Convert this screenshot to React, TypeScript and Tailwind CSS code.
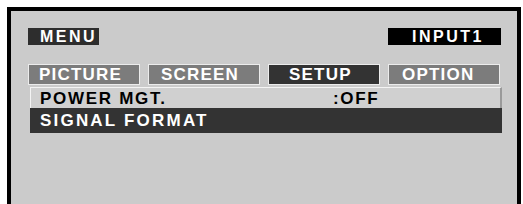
import React from "react";

const font = { fontFamily: '"Liberation Sans", Arial, Helvetica, sans-serif' };

function Tab({ label, active, pad }: { label: string; active?: boolean; pad: string }) {
  return (
    <div
      className={
        "w-[112px] h-[21px] border border-[#ececec] flex items-center text-white font-bold text-[17px] tracking-[1.2px] leading-none " +
        pad +
        " " +
        (active ? "bg-[#333333]" : "bg-[#7c7c7c]")
      }
    >
      {label}
    </div>
  );
}

export default function App() {
  return (
    <div className="w-[523px] h-[204px] bg-white overflow-hidden pl-[7px] pt-[7px]" style={font}>
      <div className="w-[514px] h-[230px] border-4 border-black bg-[#cbcbcb] flex flex-col">
        <div className="flex justify-between pl-[17px] pr-[16px] pt-[17px]">
          <div className="w-[71px] h-[17px] bg-[#2d2d2d] text-white font-bold text-[16px] tracking-[2.5px] leading-none flex items-center pl-[12px]">
            MENU
          </div>
          <div className="w-[113px] h-[17px] bg-black text-white font-bold text-[16px] tracking-[2.5px] leading-none flex items-center pl-[24px]">
            INPUT1
          </div>
        </div>
        <div className="flex gap-[8px] pl-[17px] mt-[19px]">
          <Tab label="PICTURE" pad="pl-[10px]" />
          <Tab label="SCREEN" pad="pl-[12px]" />
          <Tab label="SETUP" pad="pl-[20px]" active />
          <Tab label="OPTION" pad="pl-[13px]" />
        </div>
        <div className="ml-[19px] w-[472px] mt-[2px] flex flex-col">
          <div className="h-[21px] bg-[#d0d0d0] border-t border-l border-t-[#f4f4f4] border-l-[#f4f4f4] border-r-2 border-r-[#9a9a9a] flex items-center pl-[9px] text-black font-bold text-[17px] tracking-[1.7px] leading-none">
            <span className="w-[293px]">POWER MGT.</span>
            <span>:OFF</span>
          </div>
          <div className="h-[25px] bg-[#333333] flex items-center pl-[10px] text-white font-bold text-[17px] tracking-[2.2px] leading-none">
            SIGNAL FORMAT
          </div>
        </div>
      </div>
    </div>
  );
}
